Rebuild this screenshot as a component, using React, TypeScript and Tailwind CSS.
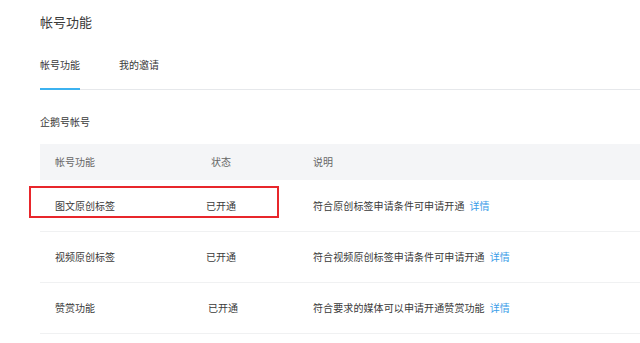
export default function App() {
  const rows = [
    { name: "图文原创标签", status: "已开通", desc: "符合原创标签申请条件可申请开通", mark: true, shift: "pl-0", h: "h-[52px]" },
    { name: "视频原创标签", status: "已开通", desc: "符合视频原创标签申请条件可申请开通", mark: false, shift: "pl-0", h: "h-[51px]" },
    { name: "赞赏功能", status: "已开通", desc: "符合要求的媒体可以申请开通赞赏功能", mark: false, shift: "pl-[2px]", h: "h-[51px]" },
  ];

  return (
    <div className="w-[640px] h-[343px] overflow-hidden bg-white pl-10 font-['Noto_Sans_CJK_SC',sans-serif] text-[#3a3a3a]">
      <div className="pt-[13px] text-[13px] leading-[18px]">帐号功能</div>

      {/* tabs */}
      <div className="mt-[27px] flex border-b border-[#e6e8eb] text-[10px] leading-[14px]">
        <div className="-mb-px mr-[39px] border-b-2 border-[#3cb2f0] pb-[16px]">帐号功能</div>
        <div className="pb-[16px]">我的邀请</div>
      </div>

      <div className="mt-[25px] text-[10px] leading-[14px]">企鹅号帐号</div>

      {/* table */}
      <div className="mt-[15px] text-[10px] leading-[14px]">
        <div className="grid h-[36px] grid-cols-[166px_107px_1fr] items-center bg-[#f4f5f7] text-[#666]">
          <div className="pl-[15px]">帐号功能</div>
          <div className="pl-[5px]">状态</div>
          <div>说明</div>
        </div>
        {rows.map((r) => (
          <div
            key={r.name}
            className={`relative grid ${r.h} grid-cols-[166px_107px_1fr] items-center border-b border-[#f0f1f2]`}
          >
            <div className="pl-[15px]">{r.name}</div>
            <div className={r.shift}>{r.status}</div>
            <div className="flex">
              <span className="tracking-[0.1px]">{r.desc}</span>
              <span className="ml-[5px] text-[#3a9de8]">详情</span>
            </div>
            {r.mark && (
              <div className="absolute left-[-11px] top-[6px] h-[32px] w-[250px] border-2 border-[#e8262b]" />
            )}
          </div>
        ))}
      </div>
    </div>
  );
}
